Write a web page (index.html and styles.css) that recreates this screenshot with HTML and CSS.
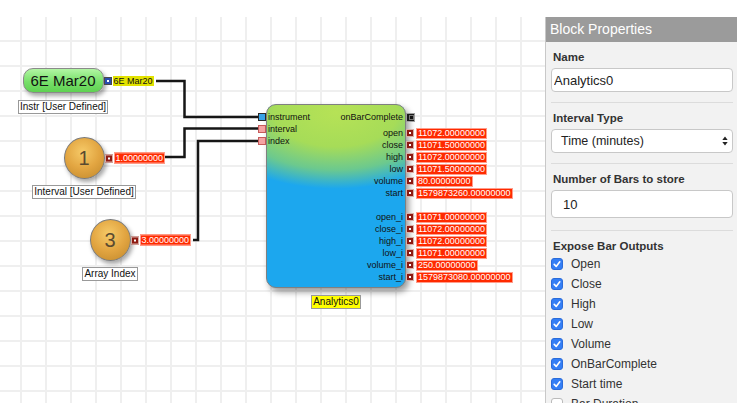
FILE: index.html
```html
<!DOCTYPE html>
<html lang="en">
<head>
    <meta charset="UTF-8">
    <title>Block Editor</title>
    <link rel="stylesheet" href="styles.css">
</head>
<body>
    <div class="app">
        <!-- Diagram canvas -->
        <div class="canvas">
            <svg class="wires" width="545" height="386">
                <path d="M156 64H184.5V100H258"/>
                <path d="M165 140H184.5V111.5H258"/>
                <path d="M193 223H198V124H258"/>
            </svg>

            <div class="src src-instr">
                <div class="shape pill">6E Mar20
                    <div class="out"><span class="port port-blue"></span><span class="val val-yellow">6E Mar20</span></div>
                </div>
                <div class="caption">Instr [User Defined]</div>
            </div>

            <div class="src src-interval">
                <div class="shape ball">1
                    <div class="out"><span class="port port-red"></span><span class="val val-red">1.00000000</span></div>
                </div>
                <div class="caption">Interval [User Defined]</div>
            </div>

            <div class="src src-index">
                <div class="shape ball">3
                    <div class="out"><span class="port port-red"></span><span class="val val-red">3.00000000</span></div>
                </div>
                <div class="caption">Array Index</div>
            </div>

            <div class="block-group">
                <div class="block">
                    <div class="inputs">
                        <div class="in-row"><span class="port port-in-blue"></span>instrument</div>
                        <div class="in-row"><span class="port port-in-pink"></span>interval</div>
                        <div class="in-row"><span class="port port-in-pink"></span>index</div>
                    </div>
                    <div class="outputs">
                        <div class="out-row first">onBarComplete<div class="pv"><span class="port port-event"></span></div></div>
                        <div class="out-row">open<div class="pv"><span class="port port-red"></span><span class="val val-red">11072.00000000</span></div></div>
                        <div class="out-row">close<div class="pv"><span class="port port-red"></span><span class="val val-red">11071.50000000</span></div></div>
                        <div class="out-row">high<div class="pv"><span class="port port-red"></span><span class="val val-red">11072.00000000</span></div></div>
                        <div class="out-row">low<div class="pv"><span class="port port-red"></span><span class="val val-red">11071.50000000</span></div></div>
                        <div class="out-row">volume<div class="pv"><span class="port port-red"></span><span class="val val-red">80.00000000</span></div></div>
                        <div class="out-row">start<div class="pv"><span class="port port-red"></span><span class="val val-red">1579873260.00000000</span></div></div>
                        <div class="out-row gap">open_i<div class="pv"><span class="port port-red"></span><span class="val val-red">11071.00000000</span></div></div>
                        <div class="out-row">close_i<div class="pv"><span class="port port-red"></span><span class="val val-red">11072.00000000</span></div></div>
                        <div class="out-row">high_i<div class="pv"><span class="port port-red"></span><span class="val val-red">11072.00000000</span></div></div>
                        <div class="out-row">low_i<div class="pv"><span class="port port-red"></span><span class="val val-red">11071.00000000</span></div></div>
                        <div class="out-row">volume_i<div class="pv"><span class="port port-red"></span><span class="val val-red">250.00000000</span></div></div>
                        <div class="out-row">start_i<div class="pv"><span class="port port-red"></span><span class="val val-red">1579873080.00000000</span></div></div>
                    </div>
                </div>
                <div class="caption caption-yellow">Analytics0</div>
            </div>
        </div>

        <!-- Properties panel -->
        <aside class="panel">
            <div class="panel-title">Block Properties</div>

            <div class="field">
                <label class="field-label">Name</label>
                <input class="text-input" type="text" value="Analytics0">
            </div>

            <div class="field">
                <label class="field-label">Interval Type</label>
                <div class="select">
                    <span>Time (minutes)</span>
                    <svg width="6" height="10" viewBox="0 0 6 10"><path d="M3 0.6L5.7 4H0.3Z M3 9.4L5.7 6H0.3Z" fill="#222"/></svg>
                </div>
            </div>

            <div class="field field-wide">
                <label class="field-label">Number of Bars to store</label>
                <input class="text-input num-input" type="text" value="10">
            </div>

            <div class="field field-last">
                <label class="field-label">Expose Bar Outputs</label>
                <ul class="checks">
                    <li><span class="check on"><svg width="12" height="12" viewBox="0 0 12 12"><path d="M3.2 6.4l2 2 3.6-4.6"/></svg></span>Open</li>
                    <li><span class="check on"><svg width="12" height="12" viewBox="0 0 12 12"><path d="M3.2 6.4l2 2 3.6-4.6"/></svg></span>Close</li>
                    <li><span class="check on"><svg width="12" height="12" viewBox="0 0 12 12"><path d="M3.2 6.4l2 2 3.6-4.6"/></svg></span>High</li>
                    <li><span class="check on"><svg width="12" height="12" viewBox="0 0 12 12"><path d="M3.2 6.4l2 2 3.6-4.6"/></svg></span>Low</li>
                    <li><span class="check on"><svg width="12" height="12" viewBox="0 0 12 12"><path d="M3.2 6.4l2 2 3.6-4.6"/></svg></span>Volume</li>
                    <li><span class="check on"><svg width="12" height="12" viewBox="0 0 12 12"><path d="M3.2 6.4l2 2 3.6-4.6"/></svg></span>OnBarComplete</li>
                    <li><span class="check on"><svg width="12" height="12" viewBox="0 0 12 12"><path d="M3.2 6.4l2 2 3.6-4.6"/></svg></span>Start time</li>
                    <li><span class="check"></span>Bar Duration</li>
                </ul>
            </div>
        </aside>
    </div>
</body>
</html>
```

FILE: styles.css
```css
/* General */
body {
    margin: 0;
    background: #fff;
    font-family: "Liberation Sans", Arial, sans-serif;
}

.app {
    display: flex;
    height: 386px;
    margin-top: 17px;
}

/* Canvas with grid */
.canvas {
    position: relative;
    flex: 1;
    overflow: hidden;
    background-color: #fff;
    background-image:
        linear-gradient(to right, #efefef 2px, transparent 2px),
        linear-gradient(to bottom, #efefef 2px, transparent 2px);
    background-size: 25px 25px;
    background-position: 20px 23px;
}

.wires {
    position: absolute;
    left: 0;
    top: 0;
}

.wires path {
    fill: none;
    stroke: #161616;
    stroke-width: 2.5;
}

/* Source nodes */
.src {
    position: absolute;
    display: flex;
    flex-direction: column;
    align-items: center;
}

.src-instr {
    left: 13px;
    top: 51px;
    width: 100px;
    gap: 7px;
}

.src-interval {
    left: 24px;
    top: 120px;
    width: 120px;
    gap: 6px;
}

.src-index {
    left: 50px;
    top: 202px;
    width: 120px;
    gap: 6px;
}

.shape {
    position: relative;
    box-sizing: border-box;
    display: flex;
    align-items: center;
    justify-content: center;
}

.pill {
    width: 81px;
    height: 25px;
    border: 1px solid #8a8a8a;
    border-radius: 10px;
    background: linear-gradient(#b2f6a4, #78e06a 55%, #5fd152);
    box-shadow: 2px 3px 4px rgba(0, 0, 0, 0.35);
    font-size: 15px;
    color: #111;
}

.ball {
    width: 41px;
    height: 42px;
    border: 1px solid #7a7a7a;
    border-radius: 50%;
    background: radial-gradient(circle at 45% 35%, #f6ca68, #e2a541 50%, #c38a2d 95%);
    box-shadow: 2px 3px 4px rgba(0, 0, 0, 0.35);
    font-size: 20px;
    color: #5a4a30;
}

.caption {
    background: #fff;
    border: 1px solid #999;
    padding: 0 1px;
    font-size: 10px;
    line-height: 12px;
    color: #111;
    white-space: nowrap;
}

.caption-yellow {
    background: #ffff00;
}

.out {
    position: absolute;
    left: calc(100% + 1px);
    top: 50%;
    transform: translateY(-50%);
    display: flex;
    align-items: center;
    gap: 1px;
}

/* Ports and values */
.port {
    position: relative;
    box-sizing: border-box;
    flex: none;
    width: 8px;
    height: 8px;
}

.port-blue {
    background: #2a4db0;
    border: 1px solid #4a4a4a;
}

.port-red {
    background: #8e1a12;
    border: 1px solid #d9b0a8;
}

.port-blue::after,
.port-red::after {
    content: "";
    position: absolute;
    left: 2px;
    top: 2px;
    width: 2px;
    height: 2px;
    background: #fff;
}

.port-in-blue {
    background: #37a2e6;
    border: 1px solid #2a2a2a;
}

.port-in-pink {
    background: #f4a3a3;
    border: 1px solid #c65a5a;
}

.port-event {
    width: 9px;
    height: 9px;
    background: #1a1a1a;
    border: 1px solid #a0a0a0;
}

.port-event::after {
    content: "";
    position: absolute;
    left: 1.5px;
    top: 1.5px;
    width: 3px;
    height: 3px;
    border: 0.5px solid #777;
    background: #111;
}

.val {
    font-size: 9px;
    white-space: nowrap;
}

.val-yellow {
    background: #e2e200;
    color: #111;
    line-height: 10px;
    padding: 0 1px;
}

.val-red {
    background: #ff2a00;
    border: 1px solid #ff9d8c;
    color: #fff;
    line-height: 9px;
    padding: 0 1px;
}

/* Analytics block */
.block-group {
    position: absolute;
    left: 266px;
    top: 87px;
    width: 140px;
    display: flex;
    flex-direction: column;
    align-items: center;
    gap: 7px;
}

.block {
    box-sizing: border-box;
    width: 140px;
    height: 184px;
    display: flex;
    justify-content: space-between;
    padding-top: 6px;
    border: 1px solid #808080;
    border-radius: 10px;
    background:
        radial-gradient(ellipse 100% 42% at 50% 4%, #b6e256 0%, #a6dc58 45%, #6cc98e 75%, rgba(30, 168, 238, 0) 100%),
        #1ca7ee;
    box-shadow: 3px 4px 6px rgba(0, 0, 0, 0.4);
    font-size: 9px;
    color: #111;
}

.in-row {
    position: relative;
    height: 12px;
    line-height: 12px;
    padding-left: 1px;
}

.in-row .port {
    position: absolute;
    left: -9px;
    top: 2px;
}

.out-row {
    position: relative;
    height: 12px;
    line-height: 12px;
    padding-right: 2px;
    text-align: right;
}

.out-row.first {
    margin-bottom: 4px;
}

.out-row.gap {
    margin-top: 12px;
}

.pv {
    position: absolute;
    left: calc(100% + 1px);
    top: 0;
    height: 12px;
    display: flex;
    align-items: center;
    gap: 2px;
}

/* Properties panel */
.panel {
    flex: none;
    width: 191px;
    overflow: hidden;
    background: #f2f2f2;
    border-left: 1px solid #c8c8c8;
}

.panel-title {
    height: 25px;
    line-height: 25px;
    padding-left: 4px;
    background: #9b9b9b;
    color: #fff;
    font-size: 14px;
}

.field {
    margin: 0 4px 0 5px;
    padding: 8px 0 10px;
    border-bottom: 1px solid #dcdcdc;
}

.field-wide {
    padding-bottom: 12px;
}

.field-last {
    border-bottom: none;
}

.field-label {
    display: block;
    margin-bottom: 3px;
    padding-left: 2px;
    font-size: 11.5px;
    font-weight: bold;
    line-height: 15px;
    color: #333;
}

.field-last .field-label {
    margin-bottom: 0;
}

.text-input {
    display: block;
    box-sizing: border-box;
    width: 100%;
    height: 24px;
    margin: 0;
    padding: 0 2px;
    border: 1px solid #c8c8c8;
    border-radius: 4px;
    background: #fff;
    font-family: "Liberation Sans", Arial, sans-serif;
    font-size: 13px;
    color: #222;
}

.num-input {
    height: 28px;
    padding-left: 11px;
}

.select {
    box-sizing: border-box;
    height: 24px;
    display: flex;
    align-items: center;
    justify-content: space-between;
    padding: 0 4px 0 9px;
    border: 1px solid #c8c8c8;
    border-radius: 4px;
    background: #fff;
    font-size: 12.5px;
    color: #222;
}

.checks {
    list-style: none;
    margin: 0;
    padding: 0;
}

.checks li {
    display: flex;
    align-items: center;
    height: 20px;
    font-size: 12px;
    color: #333;
}

.check {
    box-sizing: border-box;
    width: 12px;
    height: 12px;
    margin-right: 8px;
    border: 1px solid #bbb;
    border-radius: 3px;
    background: #fff;
}

.check.on {
    border-color: #2a6bd9;
    background: #337ef5;
}

.check svg {
    display: block;
    margin: -1px;
}

.check path {
    fill: none;
    stroke: #fff;
    stroke-width: 1.6;
    stroke-linecap: round;
    stroke-linejoin: round;
}
```
